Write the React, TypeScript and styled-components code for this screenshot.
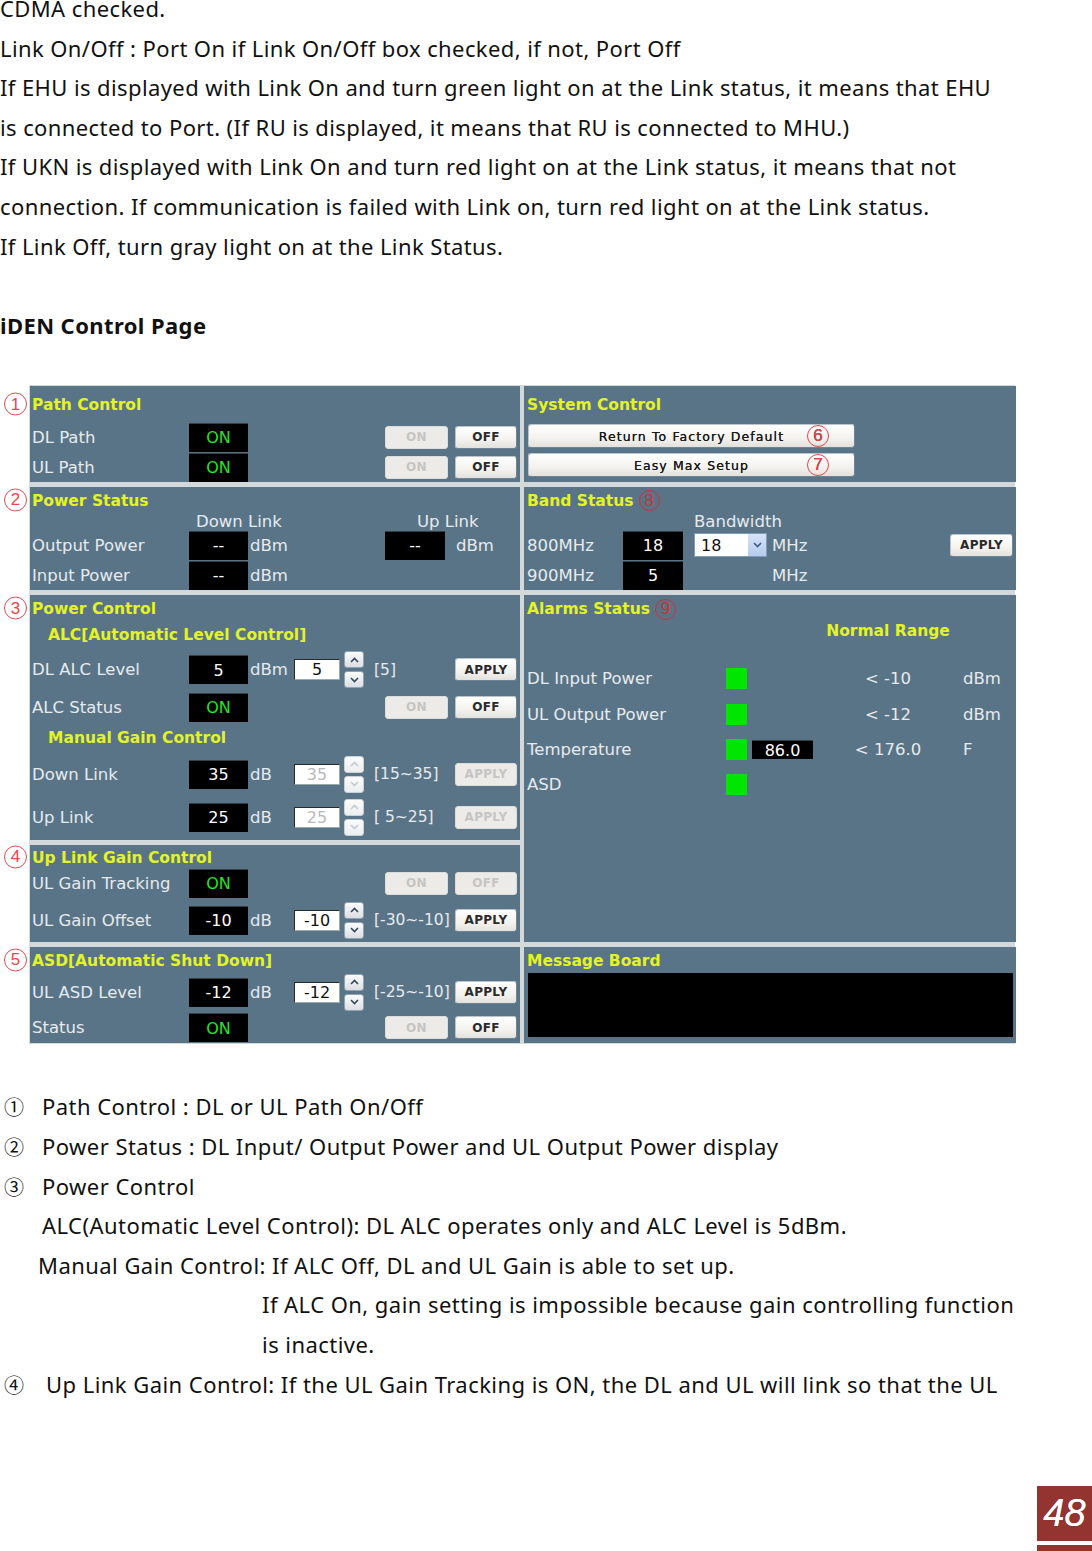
import styled, { createGlobalStyle } from "styled-components";

const GlobalStyle = createGlobalStyle`
  body {
    margin: 0;
    background: #ffffff;
  }
`;

const PANEL_FONT = `"DejaVu Sans", "Liberation Sans", sans-serif`;
const PANEL_BG = "#5a7487";
const SEP = "#d3d8db";
const YELLOW = "#e3f326";
const LABEL = "#e6ebee";

const Page = styled.div`
  width: 1092px;
  height: 1551px;
  overflow: hidden;
  display: flex;
  flex-direction: column;
  font-family: "Noto Sans", "Noto Sans CJK KR", sans-serif;
  color: #111;
`;

const Prose = styled.div`
  margin-top: -11px;
  font-size: 22px;
  letter-spacing: 0.4px;
  line-height: 39.6px;
  white-space: nowrap;
`;

const Line = styled.div<{ $indent?: number }>`
  height: 39.6px;
  padding-left: ${(p) => p.$indent ?? 0}px;
`;

const Heading = styled.div`
  font-weight: 700;
`;

const Panel = styled.div`
  margin: 40px 0 0 29px;
  width: 984px;
  padding: 1px;
  background: ${SEP};
  display: grid;
  grid-template-columns: 490px 492px;
  grid-template-rows: 96px 103px 245px 97px 96px;
  gap: 5px 4px;
  font-family: ${PANEL_FONT};
  color: ${LABEL};
`;

const Section = styled.div<{ $right?: boolean; $span?: number }>`
  background: ${PANEL_BG};
  display: flex;
  flex-direction: column;
  padding-left: ${(p) => (p.$right ? 1 : 0)}px;
  grid-column: ${(p) => (p.$right ? 2 : 1)};
  grid-row: span ${(p) => p.$span ?? 1};
`;

const Head = styled.div<{ $h: number; $indent?: number }>`
  position: relative;
  height: ${(p) => p.$h}px;
  display: flex;
  align-items: center;
  gap: 5px;
  padding-left: ${(p) => p.$indent ?? 2}px;
  padding-top: 2px;
  box-sizing: border-box;
  font-size: 15.5px;
  font-weight: 700;
  color: ${YELLOW};
  white-space: nowrap;
`;

const Mark = styled.span<{ $dark?: boolean }>`
  width: 21px;
  height: 21px;
  border: 1.5px solid ${(p) => (p.$dark ? "#c8333a" : "#e8464b")};
  border-radius: 50%;
  display: inline-flex;
  align-items: center;
  justify-content: center;
  font-family: "Liberation Sans", sans-serif;
  font-weight: 400;
  font-size: 17px;
  color: ${(p) => (p.$dark ? "#c8333a" : "#e8464b")};
  background: transparent;
  box-sizing: border-box;
`;

const SideMark = styled(Mark)`
  position: absolute;
  left: -26px;
  top: 50%;
  transform: translateY(-50%);
  width: 23px;
  height: 23px;
  background: #fff;
`;

const ButtonMark = styled(Mark)`
  position: absolute;
  right: 25px;
  top: 50%;
  transform: translateY(-50%);
  width: 22px;
  height: 22px;
  letter-spacing: 0;
`;

const Row = styled.div<{ $h: number }>`
  height: ${(p) => p.$h}px;
  display: flex;
  align-items: center;
  white-space: nowrap;
`;

const Label = styled.div<{ $w: number }>`
  width: ${(p) => p.$w}px;
  flex: none;
  padding-left: 2px;
  box-sizing: border-box;
  font-size: 16.5px;
`;

const ValueBox = styled.div<{ $on?: boolean; $w?: number; $h?: number }>`
  width: ${(p) => p.$w ?? 59}px;
  height: ${(p) => p.$h ?? 29}px;
  flex: none;
  background: #000;
  border-top: 1px solid #3a3f44;
  box-sizing: border-box;
  display: flex;
  align-items: center;
  justify-content: center;
  font-size: 16px;
  color: ${(p) => (p.$on ? "#2ae02a" : "#ffffff")};
`;

const Unit = styled.div<{ $w?: number; $ml?: number }>`
  width: ${(p) => (p.$w ? `${p.$w}px` : "auto")};
  flex: none;
  margin-left: ${(p) => p.$ml ?? 0}px;
  padding-left: 2px;
  box-sizing: border-box;
  font-size: 16.5px;
`;

const NumInput = styled.div<{ $disabled?: boolean }>`
  width: 46px;
  height: 21px;
  flex: none;
  background: #fff;
  border: 1px solid #2a2a2a;
  border-right-color: #9aa;
  border-bottom-color: #9aa;
  box-sizing: border-box;
  display: flex;
  align-items: center;
  justify-content: center;
  font-size: 16px;
  color: ${(p) => (p.$disabled ? "#b9b9b9" : "#111")};
`;

const Spin = styled.div`
  margin-left: 4px;
  display: flex;
  flex-direction: column;
  gap: 3px;
`;

const SpinBtn = styled.div<{ $disabled?: boolean }>`
  width: 20px;
  height: 17px;
  border: 1px solid ${(p) => (p.$disabled ? "#c9d0d6" : "#8fa3b6")};
  border-radius: 3px;
  background: linear-gradient(#fbfbfb, ${(p) => (p.$disabled ? "#eceeef" : "#dcdfe2")});
  box-sizing: border-box;
  display: flex;
  align-items: center;
  justify-content: center;
`;

const Range = styled.div`
  margin-left: 10px;
  font-size: 15.5px;
`;

const Btn = styled.div<{ $w: number; $disabled?: boolean; $h?: number }>`
  position: relative;
  width: ${(p) => p.$w}px;
  height: ${(p) => p.$h ?? 23}px;
  flex: none;
  box-sizing: border-box;
  border-radius: 3px;
  border: 1px solid ${(p) => (p.$disabled ? "#dcdcda" : "#b9c3cc")};
  border-bottom-color: ${(p) => (p.$disabled ? "#dcdcda" : "#6f8396")};
  border-right-color: ${(p) => (p.$disabled ? "#dcdcda" : "#6f8396")};
  background: ${(p) =>
    p.$disabled ? "#ecebe8" : "linear-gradient(#ffffff, #f3f2ee 60%, #e2e1dc)"};
  color: ${(p) => (p.$disabled ? "#c5c5c3" : "#2a2a2a")};
  display: flex;
  align-items: center;
  justify-content: center;
  font-size: 12px;
  font-weight: 700;
  letter-spacing: 0.3px;
`;

const WideBtn = styled(Btn)`
  margin-left: 3px;
  font-weight: 400;
  font-size: 12.5px;
  letter-spacing: 1.1px;
  color: #1a1a1a;
  text-shadow: 0 0 0.4px #1a1a1a;
`;

const BtnGroup = styled.div`
  margin-left: auto;
  margin-right: 3px;
  display: flex;
  gap: 7px;
`;

const Push = styled.div`
  margin-left: auto;
  margin-right: 3px;
`;

const Captions = styled.div<{ $cols: string }>`
  height: 18px;
  display: grid;
  grid-template-columns: ${(p) => p.$cols};
  align-items: center;
  font-size: 16.5px;
  white-space: nowrap;
`;

const Select = styled.div`
  width: 73px;
  height: 24px;
  flex: none;
  margin-left: 11px;
  background: #fff;
  border: 1px solid #7f9db9;
  box-sizing: border-box;
  display: flex;
  align-items: center;
  justify-content: space-between;
  font-size: 16px;
  color: #111;
  padding-left: 6px;
`;

const SelectArrow = styled.div`
  width: 18px;
  height: 100%;
  background: linear-gradient(#d6e3f7, #b5cbee);
  display: flex;
  align-items: center;
  justify-content: center;
`;

const AlarmGrid = styled.div<{ $rows?: string; $mt?: number; $h?: number }>`
  display: grid;
  grid-template-columns: 201px 21px 66px 150px auto;
  grid-template-rows: ${(p) => p.$rows ?? "auto"};
  height: ${(p) => (p.$h ? `${p.$h}px` : "auto")};
  margin-top: ${(p) => p.$mt ?? 0}px;
  align-items: center;
  font-size: 16.5px;
  white-space: nowrap;
`;

const AlarmLabel = styled.div`
  padding-left: 2px;
`;

const Led = styled.div`
  width: 21px;
  height: 21px;
  background: #00e600;
`;

const TempBox = styled(ValueBox)`
  margin-left: 5px;
`;

const RangeText = styled.div<{ $bold?: boolean }>`
  grid-column: 4;
  text-align: center;
  font-weight: ${(p) => (p.$bold ? 700 : 400)};
  font-size: ${(p) => (p.$bold ? "15.5px" : "16.5px")};
  color: ${(p) => (p.$bold ? YELLOW : LABEL)};
`;

const Board = styled.div`
  margin: 0 3px;
  height: 64px;
  background: #000;
`;

const List = styled.div`
  margin-top: 43px;
  font-size: 22px;
  letter-spacing: 0.45px;
  line-height: 39.6px;
  white-space: nowrap;
`;

const Num = styled.span<{ $w: number }>`
  display: inline-block;
  width: ${(p) => p.$w}px;
  padding-left: 4px;
  box-sizing: border-box;
  font-family: "Noto Sans CJK KR", sans-serif;
  font-size: 20px;
  letter-spacing: 0;
`;

const Footer = styled.div`
  margin-top: auto;
  display: flex;
  flex-direction: column;
  align-items: flex-end;
`;

const PageNo = styled.div`
  width: 55px;
  height: 55px;
  background: #943431;
  color: #fff;
  display: flex;
  align-items: center;
  justify-content: center;
  font-family: "Liberation Sans", sans-serif;
  font-style: italic;
  font-size: 38px;
  text-shadow: 0 0 0.6px #fff;
`;

const PageBar = styled.div`
  margin-top: 4px;
  width: 55px;
  height: 6px;
  background: #943431;
`;

function Chevron({ up, color }: { up?: boolean; color: string }) {
  return (
    <svg width="9" height="6" viewBox="0 0 9 6">
      <polyline
        points={up ? "1,5 4.5,1.5 8,5" : "1,1 4.5,4.5 8,1"}
        fill="none"
        stroke={color}
        strokeWidth="1.6"
      />
    </svg>
  );
}

function Spinner({ disabled }: { disabled?: boolean }) {
  const c = disabled ? "#c2cbd4" : "#33475c";
  return (
    <Spin>
      <SpinBtn $disabled={disabled}>
        <Chevron up color={c} />
      </SpinBtn>
      <SpinBtn $disabled={disabled}>
        <Chevron color={c} />
      </SpinBtn>
    </Spin>
  );
}

function SetRow({
  h,
  label,
  value,
  unit,
  input,
  range,
  disabled,
}: {
  h: number;
  label: string;
  value: string;
  unit: string;
  input: string;
  range: string;
  disabled?: boolean;
}) {
  return (
    <Row $h={h}>
      <Label $w={159}>{label}</Label>
      <ValueBox>{value}</ValueBox>
      <Unit $w={46}>{unit}</Unit>
      <NumInput $disabled={disabled}>{input}</NumInput>
      <Spinner disabled={disabled} />
      <Range>{range}</Range>
      <Push>
        <Btn $w={62} $disabled={disabled}>
          APPLY
        </Btn>
      </Push>
    </Row>
  );
}

function SwitchRow({
  h,
  label,
  offDisabled,
}: {
  h: number;
  label: string;
  offDisabled?: boolean;
}) {
  return (
    <Row $h={h}>
      <Label $w={159}>{label}</Label>
      <ValueBox $on>ON</ValueBox>
      <BtnGroup>
        <Btn $w={63} $disabled>
          ON
        </Btn>
        <Btn $w={62} $disabled={offDisabled}>
          OFF
        </Btn>
      </BtnGroup>
    </Row>
  );
}

const alarms = [
  { label: "DL Input Power", temp: "", range: "< -10", unit: "dBm" },
  { label: "UL Output Power", temp: "", range: "< -12", unit: "dBm" },
  { label: "Temperature", temp: "86.0", range: "< 176.0", unit: "F" },
  { label: "ASD", temp: "", range: "", unit: "" },
];

export default function App() {
  return (
    <Page>
      <GlobalStyle />
      <Prose>
        <Line>CDMA checked.</Line>
        <Line>Link On/Off : Port On if Link On/Off box checked, if not, Port Off</Line>
        <Line>
          If EHU is displayed with Link On and turn green light on at the Link status, it means that EHU
        </Line>
        <Line>is connected to Port. (If RU is displayed, it means that RU is connected to MHU.)</Line>
        <Line>
          If UKN is displayed with Link On and turn red light on at the Link status, it means that not
        </Line>
        <Line>connection. If communication is failed with Link on, turn red light on at the Link status.</Line>
        <Line>If Link Off, turn gray light on at the Link Status.</Line>
        <Line />
        <Line>
          <Heading>iDEN Control Page</Heading>
        </Line>
      </Prose>

      <Panel>
        <Section>
          <Head $h={36}>
            <SideMark>1</SideMark>
            Path Control
          </Head>
          <SwitchRow h={30} label="DL Path" />
          <SwitchRow h={30} label="UL Path" />
        </Section>

        <Section $right>
          <Head $h={36}>System Control</Head>
          <Row $h={28}>
            <WideBtn $w={327} $h={24}>
              Return To Factory Default
              <ButtonMark>6</ButtonMark>
            </WideBtn>
          </Row>
          <Row $h={30}>
            <WideBtn $w={327} $h={24}>
              Easy Max Setup
              <ButtonMark>7</ButtonMark>
            </WideBtn>
          </Row>
        </Section>

        <Section>
          <Head $h={25}>
            <SideMark>2</SideMark>
            Power Status
          </Head>
          <Captions $cols="166px 221px auto">
            <span />
            <span>Down Link</span>
            <span>Up Link</span>
          </Captions>
          <Row $h={30}>
            <Label $w={159}>Output Power</Label>
            <ValueBox>--</ValueBox>
            <Unit $w={137}>dBm</Unit>
            <ValueBox $w={60}>--</ValueBox>
            <Unit $ml={9}>dBm</Unit>
          </Row>
          <Row $h={30}>
            <Label $w={159}>Input Power</Label>
            <ValueBox>--</ValueBox>
            <Unit>dBm</Unit>
          </Row>
        </Section>

        <Section $right>
          <Head $h={25}>
            Band Status
            <Mark $dark>8</Mark>
          </Head>
          <Captions $cols="169px auto">
            <span />
            <span>Bandwidth</span>
          </Captions>
          <Row $h={30}>
            <Label $w={98}>800MHz</Label>
            <ValueBox $w={60}>18</ValueBox>
            <Select>
              18
              <SelectArrow>
                <Chevron color="#3c5a8a" />
              </SelectArrow>
            </Select>
            <Unit $ml={3}>MHz</Unit>
            <Push>
              <Btn $w={63}>APPLY</Btn>
            </Push>
          </Row>
          <Row $h={30}>
            <Label $w={98}>900MHz</Label>
            <ValueBox $w={60}>5</ValueBox>
            <Unit $ml={87}>MHz</Unit>
          </Row>
        </Section>

        <Section>
          <Head $h={26}>
            <SideMark>3</SideMark>
            Power Control
          </Head>
          <Head $h={26} $indent={18}>
            ALC[Automatic Level Control]
          </Head>
          <SetRow h={45} label="DL ALC Level" value="5" unit="dBm" input="5" range="[5]" />
          <SwitchRow h={30} label="ALC Status" />
          <Head $h={30} $indent={18}>
            Manual Gain Control
          </Head>
          <SetRow h={44} label="Down Link" value="35" unit="dB" input="35" range="[15~35]" disabled />
          <SetRow h={42} label="Up Link" value="25" unit="dB" input="25" range="[ 5~25]" disabled />
        </Section>

        <Section $right $span={2}>
          <Head $h={26}>
            Alarms Status
            <Mark $dark>9</Mark>
          </Head>
          <AlarmGrid $h={19}>
            <RangeText $bold>Normal Range</RangeText>
          </AlarmGrid>
          <AlarmGrid $mt={20} $rows="36px 36px 35px 35px">
            {alarms.map((a) => [
              <AlarmLabel key={`${a.label}-l`}>{a.label}</AlarmLabel>,
              <Led key={`${a.label}-led`} />,
              <div key={`${a.label}-t`}>
                {a.temp && (
                  <TempBox $w={61} $h={19}>
                    {a.temp}
                  </TempBox>
                )}
              </div>,
              <RangeText key={`${a.label}-r`}>{a.range}</RangeText>,
              <div key={`${a.label}-u`}>{a.unit}</div>,
            ])}
          </AlarmGrid>
        </Section>

        <Section>
          <Head $h={23}>
            <SideMark>4</SideMark>
            Up Link Gain Control
          </Head>
          <SwitchRow h={30} label="UL Gain Tracking" offDisabled />
          <SetRow h={44} label="UL Gain Offset" value="-10" unit="dB" input="-10" range="[-30~-10]" />
        </Section>

        <Section>
          <Head $h={25}>
            <SideMark>5</SideMark>
            ASD[Automatic Shut Down]
          </Head>
          <SetRow h={40} label="UL ASD Level" value="-12" unit="dB" input="-12" range="[-25~-10]" />
          <SwitchRow h={31} label="Status" />
        </Section>

        <Section $right>
          <Head $h={26}>Message Board</Head>
          <Board />
        </Section>
      </Panel>

      <List>
        <Line>
          <Num $w={42}>①</Num>Path Control : DL or UL Path On/Off
        </Line>
        <Line>
          <Num $w={42}>②</Num>Power Status : DL Input/ Output Power and UL Output Power display
        </Line>
        <Line>
          <Num $w={42}>③</Num>Power Control
        </Line>
        <Line $indent={42}>ALC(Automatic Level Control): DL ALC operates only and ALC Level is 5dBm.</Line>
        <Line $indent={38}>Manual Gain Control: If ALC Off, DL and UL Gain is able to set up.</Line>
        <Line $indent={262}>If ALC On, gain setting is impossible because gain controlling function</Line>
        <Line $indent={262}>is inactive.</Line>
        <Line>
          <Num $w={46}>④</Num>Up Link Gain Control: If the UL Gain Tracking is ON, the DL and UL will link so that the UL
        </Line>
      </List>

      <Footer>
        <PageNo>48</PageNo>
        <PageBar />
      </Footer>
    </Page>
  );
}
